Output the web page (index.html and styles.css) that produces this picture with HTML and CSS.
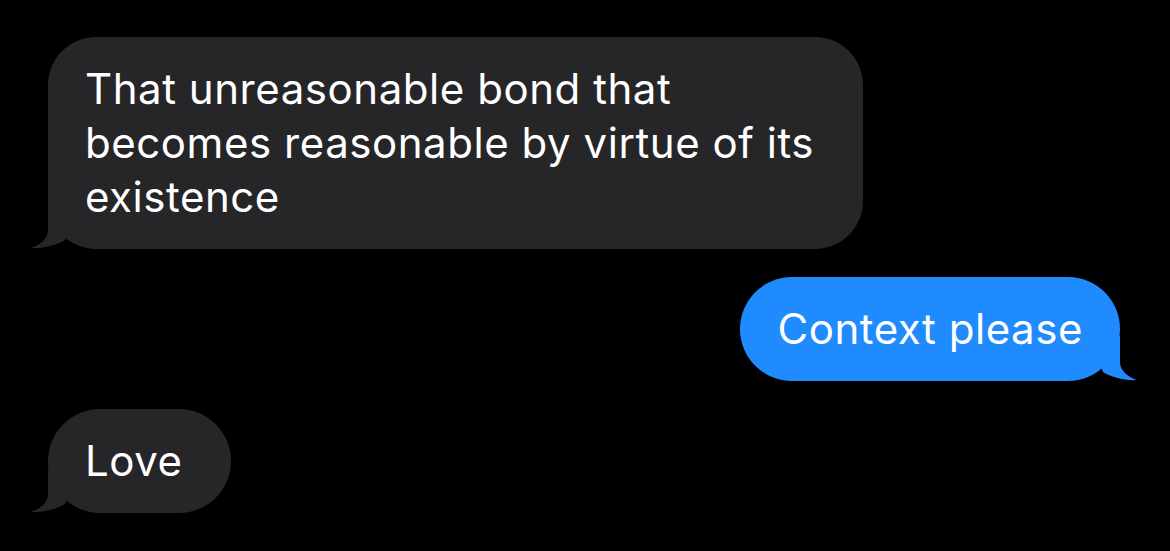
FILE: index.html
```html
<!DOCTYPE html>
<html>
<head>
<meta charset="utf-8">
<link rel="stylesheet" href="styles.css">
</head>
<body>
<div class="thread">
  <div class="row row-in">
    <div class="bubble bubble-in bubble-wide">
      That unreasonable bond that becomes reasonable by virtue of its existence
      <svg class="tail tail-in" width="44" height="45" viewBox="0 0 44 45"><path d="M17,0 V26 C17,35 9,41 0,44 C12,45 26,41 34,36 L40,20 L40,0 Z"/></svg>
    </div>
  </div>
  <div class="row row-out">
    <div class="bubble bubble-out">
      Context please
      <svg class="tail tail-out" width="44" height="45" viewBox="0 0 44 45"><path d="M17,0 V26 C17,35 9,41 0,44 C12,45 26,41 34,36 L40,20 L40,0 Z"/></svg>
    </div>
  </div>
  <div class="row row-in">
    <div class="bubble bubble-in bubble-short">
      Love
      <svg class="tail tail-in" width="44" height="45" viewBox="0 0 44 45"><path d="M17,0 V26 C17,35 9,41 0,44 C12,45 26,41 34,36 L40,20 L40,0 Z"/></svg>
    </div>
  </div>
</div>
</body>
</html>
```
FILE: styles.css
```css
html, body {
  margin: 0;
  padding: 0;
  background: #000;
}
body {
  width: 1170px;
  height: 551px;
  overflow: hidden;
  font-family: Inter, "Noto Sans", sans-serif;
  color: #fff;
}
.thread {
  display: flex;
  flex-direction: column;
  gap: 28px;
  padding: 37px 50px 0 48px;
}
.row {
  display: flex;
}
.row-in { justify-content: flex-start; }
.row-out { justify-content: flex-end; }
.bubble {
  position: relative;
  font-size: 42px;
  line-height: 54px;
  padding: 25px 37px 25px 37px;
  border-radius: 52px;
  letter-spacing: 0.55px;
}
.bubble-wide {
  width: 815px;
  box-sizing: border-box;
  padding-right: 30px;
  border-radius: 48px;
}
.bubble-short {
  padding-right: 48px;
}
.bubble-in { background: #262629; }
.bubble-out { background: #1f8bfe; }
.tail {
  position: absolute;
  bottom: 0;
  display: block;
}
.tail-in {
  left: -17px;
  fill: #262629;
}
.tail-out {
  right: -17px;
  fill: #1f8bfe;
  transform: scaleX(-1);
}
```
